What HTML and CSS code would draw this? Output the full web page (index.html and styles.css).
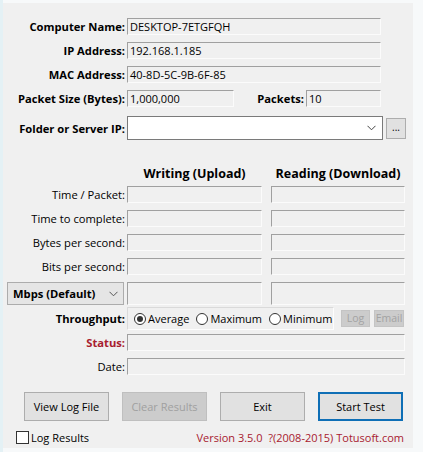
FILE: index.html
```html
<!DOCTYPE html>
<html>
<head>
<meta charset="utf-8">
<link rel="stylesheet" href="styles.css">
</head>
<body>
<div class="win">
  <div class="info">
    <div class="row">
      <span class="lbl bold">Computer Name:</span>
      <span class="fld w-full">DESKTOP-7ETGFQH</span>
    </div>
    <div class="row">
      <span class="lbl bold">IP Address:</span>
      <span class="fld w-full">192.168.1.185</span>
    </div>
    <div class="row">
      <span class="lbl bold">MAC Address:</span>
      <span class="fld w-full">40-8D-5C-9B-6F-85</span>
    </div>
    <div class="row">
      <span class="lbl bold">Packet Size (Bytes):</span>
      <span class="fld w-size">1,000,000</span>
      <span class="lbl2 bold">Packets:</span>
      <span class="fld w-pk">10</span>
    </div>
    <div class="row folder">
      <span class="lbl bold">Folder or Server IP:</span>
      <span class="combo">
        <svg class="chev" width="9" height="6" viewBox="0 0 9 6"><path d="M0.5 0.8 L4.5 4.8 L8.5 0.8" fill="none" stroke="#444" stroke-width="1"/></svg>
      </span>
      <span class="dots">...</span>
    </div>
  </div>

  <div class="results">
    <div class="heads">
      <span class="head">Writing (Upload)</span>
      <span class="head h2">Reading (Download)</span>
    </div>
    <div class="row">
      <span class="lbl">Time / Packet:</span>
      <span class="fld w-c1"></span><span class="fld w-c2"></span>
    </div>
    <div class="row">
      <span class="lbl">Time to complete:</span>
      <span class="fld w-c1"></span><span class="fld w-c2"></span>
    </div>
    <div class="row">
      <span class="lbl">Bytes per second:</span>
      <span class="fld w-c1"></span><span class="fld w-c2"></span>
    </div>
    <div class="row">
      <span class="lbl">Bits per second:</span>
      <span class="fld w-c1"></span><span class="fld w-c2"></span>
    </div>
    <div class="row tall">
      <span class="select bold">Mbps (Default)
        <svg class="chev2" width="9" height="6" viewBox="0 0 9 6"><path d="M0.5 0.8 L4.5 4.8 L8.5 0.8" fill="none" stroke="#555" stroke-width="1"/></svg>
      </span>
      <span class="fld w-c1"></span><span class="fld w-c2"></span>
    </div>
    <div class="row through">
      <span class="lbl bold">Throughput:</span>
      <span class="radios">
        <span class="radio on"></span><span class="rtxt">Average</span>
        <span class="radio"></span><span class="rtxt">Maximum</span>
        <span class="radio"></span><span class="rtxt">Minimum</span>
      </span>
      <span class="mini b-log">Log</span>
      <span class="mini b-email">Email</span>
    </div>
    <div class="row">
      <span class="lbl bold red">Status:</span>
      <span class="fld w-wide"></span>
    </div>
    <div class="row">
      <span class="lbl">Date:</span>
      <span class="fld w-wide"></span>
    </div>
  </div>

  <div class="actions">
    <span class="btn">View Log File</span>
    <span class="btn disabled">Clear Results</span>
    <span class="btn">Exit</span>
    <span class="btn primary">Start Test</span>
  </div>

  <div class="footer">
    <span class="check"></span>
    <span class="chk-lbl">Log Results</span>
    <span class="version">Version 3.5.0&nbsp; ?(2008-2015) Totusoft.com</span>
  </div>
</div>
</body>
</html>
```

FILE: styles.css
```css
* { box-sizing: border-box; }
html, body { margin: 0; padding: 0; }
body {
  width: 423px;
  height: 452px;
  overflow: hidden;
  background: linear-gradient(to right, #e4f1f5 3px, #f7f9fa 3px);
  font-family: "Open Sans", "Noto Sans", sans-serif;
  font-size: 11px;
  color: #000;
  padding-top: 3px;
}
.win {
  margin-left: 3px;
  width: 410px;
  height: 445px;
  background: #f0f0f0;
  display: flex;
  flex-direction: column;
}
.bold { font-weight: 700; }
.red { color: #a8202f; }

.info {
  display: flex;
  flex-direction: column;
  padding-top: 15px;
}
.row {
  display: flex;
  align-items: center;
  height: 17px;
  margin-bottom: 7px;
  flex: none;
}
.lbl {
  width: 122px;
  margin-right: 2px;
  text-align: right;
  white-space: nowrap;
  line-height: 17px;
  font-size: 11.2px;
}
.lbl2 {
  width: 70px;
  margin-right: 2px;
  text-align: right;
  white-space: nowrap;
  font-size: 11.2px;
}
.fld {
  height: 17px;
  border-top: 1px solid #a0a0a0;
  border-left: 1px solid #a0a0a0;
  border-bottom: 1px solid #fbfbfb;
  border-right: 1px solid #fbfbfb;
  background: #f0f0f0;
  padding-left: 2px;
  line-height: 15px;
  white-space: nowrap;
  overflow: hidden;
}
.w-full { width: 254px; }
.w-size { width: 107px; }
.w-pk { width: 75px; }
.w-c1 { width: 135px; margin-right: 9px; }
.w-c2 { width: 134px; }
.w-wide { width: 278px; }

.row.folder {
  height: 24px;
  margin-top: 2px;
  margin-bottom: 0;
}
.combo {
  width: 256px;
  height: 24px;
  background: #fff;
  border: 1px solid #7a7a7a;
  display: flex;
  align-items: center;
  justify-content: flex-end;
  padding-right: 6px;
}
.dots {
  width: 20px;
  height: 21px;
  margin-left: 3px;
  background: #e1e1e1;
  border: 1px solid #adadad;
  font-size: 10px;
  text-align: center;
  line-height: 17px;
}

.results {
  display: flex;
  flex-direction: column;
  padding-top: 26px;
}
.heads {
  display: flex;
  height: 16px;
  margin-bottom: 4px;
  padding-left: 124px;
}
.head {
  width: 144px;
  font-weight: 700;
  font-size: 12.5px;
  text-align: center;
  line-height: 16px;
  padding-right: 9px;
  white-space: nowrap;
}
.head.h2 { width: 134px; padding-right: 0; }

.row.tall { height: 23px; margin-bottom: 2px; }
.row.tall .fld { height: 23px; }
.select {
  width: 117px;
  height: 23px;
  margin-left: 4px;
  margin-right: 3px;
  background: #e5e5e5;
  border: 1px solid #acacac;
  display: flex;
  align-items: center;
  justify-content: space-between;
  padding: 0 5px 0 5px;
  white-space: nowrap;
  font-size: 11.2px;
}

.row.through { height: 23px; margin-bottom: 4px; }
.radios {
  width: 207px;
  height: 23px;
  border: 1px solid #dadada;
  border-right-color: #fdfdfd;
  border-bottom-color: #fdfdfd;
  display: flex;
  align-items: center;
  padding-left: 6px;
}
.radio {
  width: 12px;
  height: 12px;
  border: 1px solid #333;
  border-radius: 50%;
  background: #fff;
  display: flex;
  align-items: center;
  justify-content: center;
  flex: none;
}
.radio.on::after {
  content: "";
  width: 6px;
  height: 6px;
  border-radius: 50%;
  background: #333;
}
.rtxt { margin-left: 2px; margin-right: 7px; }
.mini {
  height: 17px;
  background: #cccccc;
  color: #a3a3a3;
  border: 1px solid #c4c4c4;
  text-align: center;
  line-height: 15px;
  font-size: 10.5px;
}
.b-log { width: 29px; margin-left: 7px; }
.b-email { width: 30px; margin-left: 4px; }

.actions {
  display: flex;
  gap: 13px;
  padding-left: 21px;
  margin-top: 10px;
  flex: none;
}
.btn {
  width: 85px;
  height: 29px;
  background: #e1e1e1;
  border: 1px solid #adadad;
  text-align: center;
  line-height: 27px;
}
.btn.disabled {
  background: #cccccc;
  border-color: #bfbfbf;
  color: #a0a0a0;
}
.btn.primary {
  border: 2px solid #0f6fb6;
  line-height: 25px;
}

.footer {
  display: flex;
  align-items: center;
  height: 14px;
  margin-top: 9px;
  padding-left: 13px;
  flex: none;
}
.check {
  width: 13px;
  height: 13px;
  border: 1px solid #333;
  background: #fff;
}
.chk-lbl { margin-left: 2px; }
.version {
  margin-left: auto;
  margin-right: 9px;
  color: #a8202f;
}
```
